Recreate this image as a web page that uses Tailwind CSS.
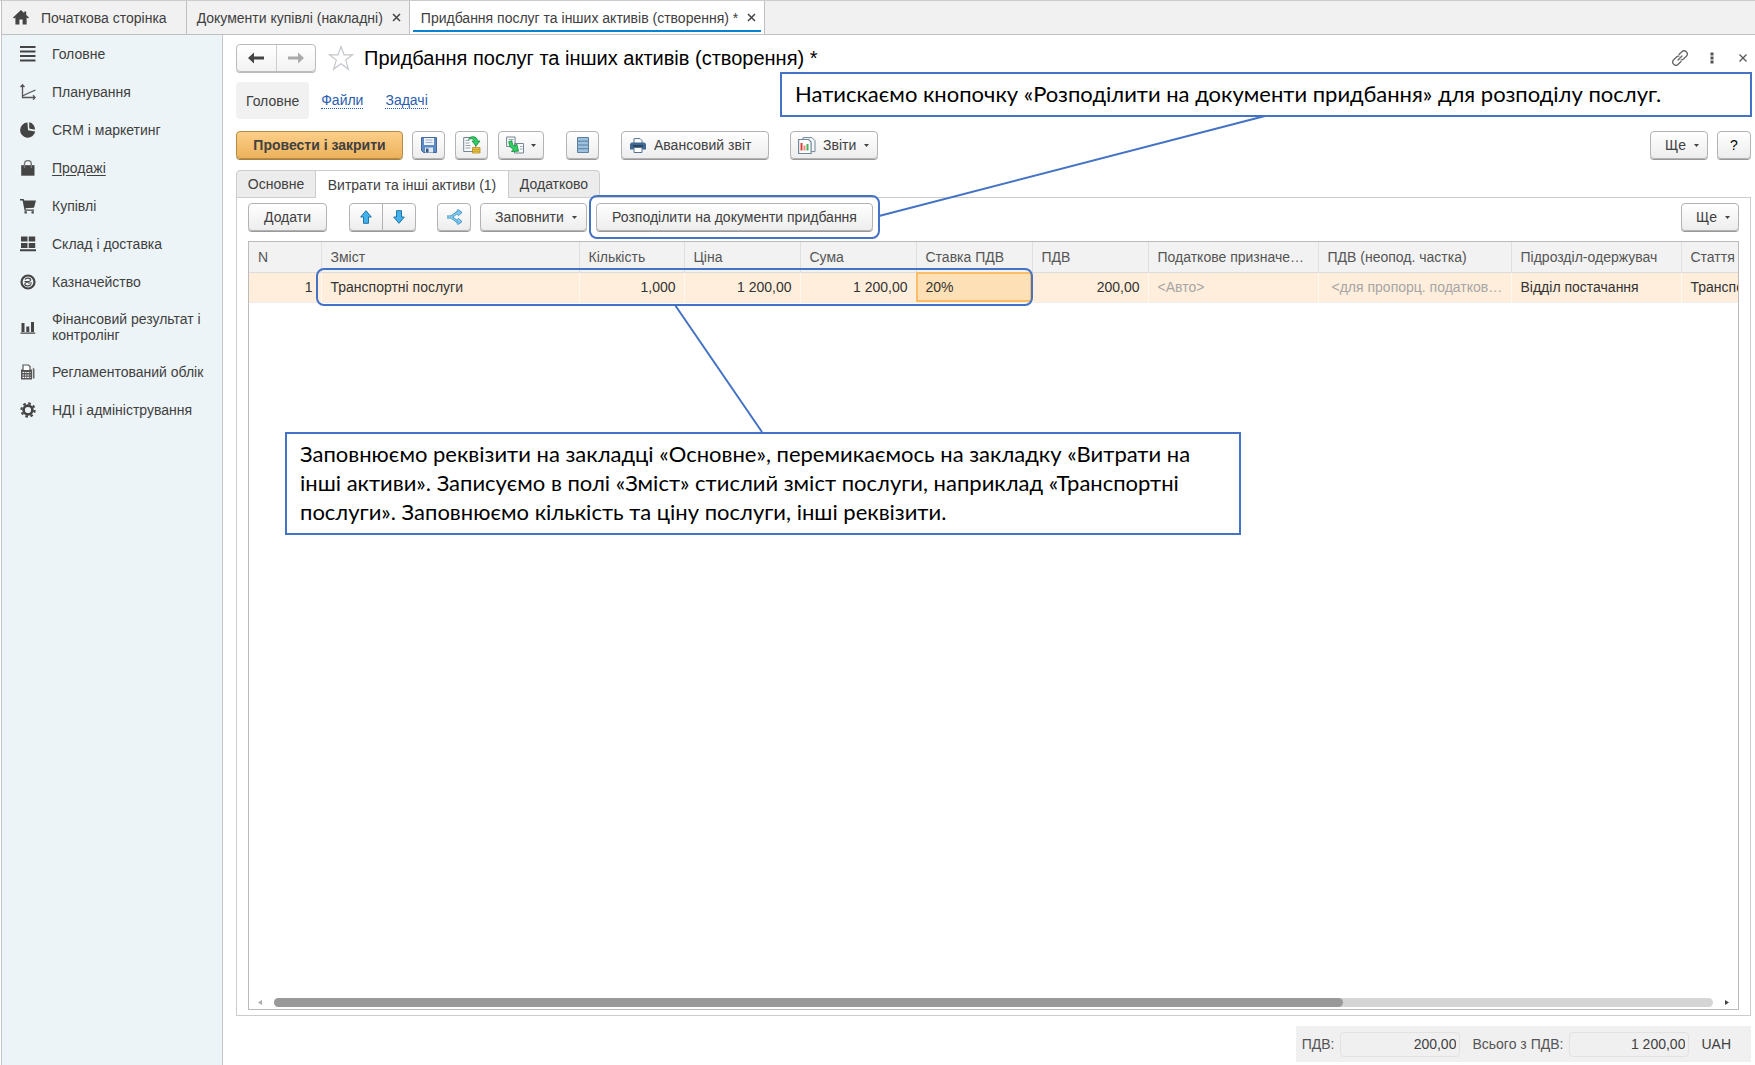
<!DOCTYPE html>
<html lang="uk">
<head>
    <meta charset="UTF-8">
    <meta name="viewport" content="width=device-width, initial-scale=1.0">
    <title>Придбання послуг та інших активів (створення) *</title>
    <script src="https://cdn.jsdelivr.net/npm/@tailwindcss/browser@4"></script>
</head>
<body class="bg-white font-['Liberation_Sans',Arial,sans-serif] text-sm text-[#404040]">
<div class="relative flex h-screen flex-col overflow-hidden border-t border-[#c9cdd1] pl-px">

    <!-- Open windows -->
    <nav class="flex h-[34px] shrink-0 border-b border-l border-[#c0c0c0] bg-[#f1f1f1] leading-4">
        <a href="#" class="flex items-center gap-3 border-r border-[#c0c0c0] pl-[11px] pr-[19px]">
            <svg class="h-[15px] w-4" viewBox="0 0 16 15" fill="#444"><path d="M8 0 0 7.6l1 1 1.4-1.2V14.5h4V9.6h3.2v4.9h4V7.4L15 8.6l1-1-2.8-2.7V1.5h-2v1.6z"/></svg>
            Початкова сторінка
        </a>
        <div class="flex items-center gap-[9px] border-r border-[#c0c0c0] px-2">
            <a href="#" class="pl-[2px]">Документи купівлі (накладні)</a>
            <button aria-label="Закрити"><svg class="size-[9px]" viewBox="0 0 9 9" stroke="#444" stroke-width="1.500"><path d="M1 1l7 7M8 1l-7 7"/></svg></button>
        </div>
        <div class="flex border-r border-[#c0c0c0] bg-white px-[3px]">
            <div class="mb-[2px] flex items-center gap-[9px] border-b-2 border-[#0a84d0] pl-2 pr-[5px] pt-1">
                <a href="#">Придбання послуг та інших активів (створення) *</a>
                <button aria-label="Закрити"><svg class="size-[9px]" viewBox="0 0 9 9" stroke="#444" stroke-width="1.500"><path d="M1 1l7 7M8 1l-7 7"/></svg></button>
            </div>
        </div>
    </nav>

    <div class="flex min-h-0 flex-1">
        <!-- Sections -->
        <aside class="w-[222px] shrink-0 border-x border-[#c4c8ca] bg-[#edf4f7] leading-4">
            <a href="#" class="flex items-center gap-4 py-[11px] pl-[18px] pr-3">
                <svg class="size-4 shrink-0" viewBox="0 0 16 16" fill="#444"><path d="M0 0h15.500v2H0zM0 4.500h15.500v2H0zM0 9h15.500v2H0zM0 13.500h15.500v2H0z"/></svg>
                Головне
            </a>
            <a href="#" class="flex items-center gap-4 py-[11px] pl-[18px] pr-3">
                <svg class="size-4 shrink-0" viewBox="0 0 16 16" fill="none" stroke="#555" stroke-width="1.300"><path d="M2.500 1v12.500H15M.500 3l2-2.200 2 2.200M13 11.300l2.200 2.200-2.200 2.200M2.500 12 7.500 9.500 15.500 6"/></svg>
                Планування
            </a>
            <a href="#" class="flex items-center gap-4 py-[11px] pl-[18px] pr-3">
                <svg class="size-4 shrink-0" viewBox="0 0 16 16" fill="#444"><path d="M7.500.5A7.600 7.600 0 1 0 15.200 9.500L8 8.200z"/><path d="M9.200.3v6.200l5.800 1.200A7 7 0 0 0 9.200.3z"/></svg>
                CRM і маркетинг
            </a>
            <a href="#" class="flex items-center gap-4 py-[11px] pl-[18px] pr-3 underline underline-offset-2">
                <svg class="size-4 shrink-0" viewBox="0 0 16 16" fill="#444"><path d="M1.200 5.200h13.300v10.500H1.200z"/><path d="M4.500 8V4a3.400 3.400 0 0 1 6.800 0v4" fill="none" stroke="#777" stroke-width="1.400"/></svg>
                Продажі
            </a>
            <a href="#" class="flex items-center gap-4 py-[11px] pl-[18px] pr-3">
                <svg class="size-4 shrink-0" viewBox="0 0 16 16" fill="#444"><path d="M0 1h3.600l.6 1.500H16L14 9.800l-8.500.4.300 1.200H14v1.300H4.600L2.600 2.400H0z"/><path d="M4.500 13.300h2.300v2.200H4.500zM11.500 13.300h2.300v2.200h-2.300z"/></svg>
                Купівлі
            </a>
            <a href="#" class="flex items-center gap-4 py-[11px] pl-[18px] pr-3">
                <svg class="size-4 shrink-0" viewBox="0 0 16 16" fill="#444"><path d="M1 .5h6.500v5H1zM8.700.5h6.500v5H8.700zM1 7h6.500v5H1zM8.700 7h6.500v5H8.700zM0 13.300h16v2H0z"/></svg>
                Склад і доставка
            </a>
            <a href="#" class="flex items-center gap-4 py-[11px] pl-[18px] pr-3">
                <svg class="size-4 shrink-0" viewBox="0 0 16 16" fill="none" stroke="#444"><circle cx="8" cy="8" r="6.500" stroke-width="2.200"/><path d="M5 5.500C6 3.500 10.500 3.600 10.700 6c0 2-6 2-6 4 .3 2.400 5 2.500 6.300.4M4.500 7.500h4M8 9h4" stroke-width="1.200"/></svg>
                Казначейство
            </a>
            <a href="#" class="flex items-center gap-4 py-[10px] pl-[18px] pr-3">
                <svg class="size-4 shrink-0" viewBox="0 0 16 16" fill="#444"><path d="M.500 13.500H15.200v1.300H.5zM1.500 4h3v9h-3zM6.300 7.500h3v5.500h-3zM11 3h3v10h-3z"/></svg>
                Фінансовий результат і контролінг
            </a>
            <a href="#" class="flex items-center gap-4 py-[11px] pl-[18px] pr-3">
                <svg class="size-4 shrink-0" viewBox="0 0 16 16"><path d="M1 5.500h11v10H1z" fill="#555"/><path d="M3 6V1h5.500L10 2.500V6" fill="#fff" stroke="#555" stroke-width="1.200"/><path d="M12.800 3.500 14.500 5v9.500h-1.700z" fill="#666"/><path d="M2.500 8.500h8M2.500 11h8M2.500 13.400h8" stroke="#fff" stroke-width="1.200" stroke-dasharray="1.600 .8"/></svg>
                Регламентований облік
            </a>
            <a href="#" class="flex items-center gap-4 py-[11px] pl-[18px] pr-3">
                <svg class="size-4 shrink-0" viewBox="0 0 16 16" fill="none" stroke="#444"><circle cx="8" cy="8" r="4.400" stroke-width="2.600"/><circle cx="8" cy="8" r="6.600" stroke-width="2.200" stroke-dasharray="2.600 2.583"/></svg>
                НДІ і адміністрування
            </a>
        </aside>

        <main class="flex min-w-0 flex-1 flex-col pl-[13px] pr-1 pt-[9px]">
            <!-- Form title -->
            <header class="flex h-7 shrink-0 items-center">
                <div class="flex h-7 w-20 divide-x divide-[#ccc] rounded-sm border border-[#bbb] bg-linear-to-b from-white to-[#f2f2f2] shadow-[0_1px_0_#bbb]">
                    <button aria-label="Назад" class="flex flex-1 items-center justify-center"><svg class="h-3 w-4" viewBox="0 0 16 12" fill="#444"><path d="M0 6 6 .5v4h10v3H6v4z"/></svg></button>
                    <button aria-label="Вперед" class="flex flex-1 items-center justify-center"><svg class="h-3 w-4" viewBox="0 0 16 12" fill="#aaa"><path d="M16 6 10 .5v4H0v3h10v4z"/></svg></button>
                </div>
                <button aria-label="До обраного" class="ml-3"><svg class="size-[26px]" viewBox="0 0 26 26" fill="#fff" stroke="#c4c8cc" stroke-width="1.200"><path d="m13 1.500 3 8.300h8.700l-7 5.300 2.700 9L13 18.700 5.600 24.100l2.700-9-7-5.300H10z"/></svg></button>
                <h1 class="ml-[10px] text-[20px] leading-7 text-black">Придбання послуг та інших активів (створення) *</h1>
                <div class="ml-auto flex items-center pr-1">
                    <button aria-label="Посилання"><svg class="size-4" viewBox="0 0 16 16" fill="none" stroke="#666" stroke-width="1.300" stroke-linecap="round"><path d="M7 4.500 9.800 1.700a3 3 0 0 1 4.500 4.500L11.500 9a3 3 0 0 1-2.300.8M9 11.500l-2.800 2.800a3 3 0 0 1-4.500-4.500L4.500 7a3 3 0 0 1 2.300-.8M6 10l4-4"/></svg></button>
                    <button aria-label="Ще дії" class="ml-[22px]"><svg class="h-3 w-1" viewBox="0 0 4 12" fill="#555"><path d="M.500.5h3v3h-3zM.500 4.500h3v3h-3zM.500 8.500h3v3h-3z"/></svg></button>
                    <button aria-label="Закрити" class="ml-[25px]"><svg class="size-2" viewBox="0 0 8 8" stroke="#555" stroke-width="1.300"><path d="M.5.5l7 7M7.500.5l-7 7"/></svg></button>
                </div>
            </header>

            <nav class="mt-[10px] flex h-[37px] shrink-0 items-center text-[#2a5db0]">
                <a href="#" class="flex h-full items-center rounded-sm bg-[#f1f1f1] px-[10px] text-[#404040]">Головне</a>
                <a href="#" class="ml-3 border-b border-dotted border-[#2a5db0] leading-4">Файли</a>
                <a href="#" class="ml-[22px] border-b border-dotted border-[#2a5db0] leading-4">Задачі</a>
            </nav>

            <!-- Command bar -->
            <div class="mt-3 flex h-7 shrink-0">
                <button class="w-[167px] rounded-sm border border-[#b58a45] bg-linear-to-b from-[#fdcf88] to-[#ecb25c] font-bold shadow-[0_1px_0_#a88040]">Провести і закрити</button>
                <button aria-label="Записати" class="ml-[9px] flex w-[33px] items-center justify-center rounded-sm border border-[#b3b3b3] bg-linear-to-b from-white to-[#ededed] shadow-[0_1px_0_#999]">
                    <svg class="size-4" viewBox="0 0 16 16"><path d="M.5.5h15v15h-13l-2-2z" fill="#5b8ac4" stroke="#46699b"/><path d="M3 1h10v7H3z" fill="#eef4fa"/><path d="M4.500 3h7M4.500 5.500h7" stroke="#9ab3cf"/><path d="M4 10.500h8v5H4z" fill="#dfe8f0"/><path d="M5 11.500h2.500v4H5z" fill="#365988"/></svg>
                </button>
                <button aria-label="Провести" class="ml-[10px] flex w-[33px] items-center justify-center rounded-sm border border-[#b3b3b3] bg-linear-to-b from-white to-[#ededed] shadow-[0_1px_0_#999]">
                    <svg class="size-[18px]" viewBox="0 0 18 18"><path d="M.7 1.500h12v14H.7z" fill="#f7f9fa" stroke="#76858f"/><path d="M2.500 4.500h4M2.500 7h4M2.500 9.500h5M2.500 12h5" stroke="#9aa6ae"/><path d="M5.500 3.500C7-.5 14-.5 14.500 5H17l-4 5-4-5h2.500C11 3 8 2 5.500 3.500z" fill="#2fce62" stroke="#158a3c" stroke-width=".8"/><path d="M9.500 11.500h7.500v5.500H9.500z" fill="#f2cd4a" stroke="#b58d1d" stroke-width=".8"/><path d="M9.500 13.300h7.500M9.500 15.200h7.500" stroke="#b58d1d" stroke-width=".8"/></svg>
                </button>
                <button aria-label="Створити на підставі" class="ml-[10px] flex w-[46px] items-center justify-center gap-[7px] rounded-sm border border-[#b3b3b3] bg-linear-to-b from-white to-[#ededed] shadow-[0_1px_0_#999]">
                    <svg class="size-[18px]" viewBox="0 0 18 18"><path d="M.6 1h8.500v9.500H.6zM8.500 7.500h9v9.500h-9z" fill="#f7f9fa" stroke="#76858f"/><path d="M2.500 3.500h5M14 10.500h2.500M14 13h2.500" stroke="#9aa6ae"/><path d="M2.800 5.500 6 4.800c0 3 .8 4.600 2.800 5.400l2-2.200 1.700 7.200-7 .3 1.800-2.200C4.500 12 3 9.500 2.800 5.500z" fill="#2fce62" stroke="#158a3c" stroke-width=".8"/></svg>
                    <svg class="h-[3px] w-[5px]" viewBox="0 0 5 3" fill="#444"><path d="M0 0h5L2.500 3z"/></svg>
                </button>
                <button aria-label="Рухи документа" class="ml-[22px] flex w-[33px] items-center justify-center rounded-sm border border-[#b3b3b3] bg-linear-to-b from-white to-[#ededed] shadow-[0_1px_0_#999]">
                    <svg class="h-4 w-3" viewBox="0 0 12 16" fill="#9cc0dd" stroke="#5b7f9e"><path d="M.5.5h11v15H.5zM.5 4.200h11M.5 8h11M.5 11.700h11"/></svg>
                </button>
                <button class="ml-[22px] flex w-[148px] items-center gap-2 rounded-sm border border-[#b3b3b3] bg-linear-to-b from-white to-[#ededed] pl-2 shadow-[0_1px_0_#999]">
                    <svg class="h-[15px] w-4" viewBox="0 0 16 15"><path d="M4 5V.6h6l2 2V5" fill="#fff" stroke="#59738c"/><path d="M1.500 4.500h13L16 6v5.500H0V6z" fill="#3f6990"/><path d="M3 8h10" stroke="#1f3c58" stroke-width="1.500"/><path d="M4 9.500h8v5H4z" fill="#fff" stroke="#59738c"/></svg>
                    Авансовий звіт
                </button>
                <button class="ml-[21px] flex w-[88px] items-center rounded-sm border border-[#b3b3b3] bg-linear-to-b from-white to-[#ededed] pl-[7px] shadow-[0_1px_0_#999]">
                    <svg class="h-[17px] w-[18px]" viewBox="0 0 18 17"><path d="M5 .6h9l3 3v11H5z" fill="#f4f6f8" stroke="#71879a"/><path d="M.6 2.500h10l2.500 2.500v11.500H.6z" fill="#fff" stroke="#71879a" stroke-width="1.200"/><path d="M2.500 6h2v7.500h-2z" fill="#d8413c"/><path d="M5.500 8.500h2v5h-2z" fill="#e88c80"/><path d="M8.500 7h2v6.500h-2z" fill="#44b05a"/></svg>
                    <span class="ml-[7px]">Звіти</span>
                    <svg class="ml-2 h-[3px] w-[5px]" viewBox="0 0 5 3" fill="#444"><path d="M0 0h5L2.500 3z"/></svg>
                </button>
                <button class="ml-auto flex w-[58px] items-center gap-2 rounded-sm border border-[#b3b3b3] bg-linear-to-b from-white to-[#ededed] pl-[14px] shadow-[0_1px_0_#999]">Ще <svg class="h-[3px] w-[5px]" viewBox="0 0 5 3" fill="#444"><path d="M0 0h5L2.500 3z"/></svg></button>
                <button aria-label="Довідка" class="ml-[9px] w-[34px] rounded-sm border border-[#b3b3b3] bg-linear-to-b from-white to-[#ededed] text-black shadow-[0_1px_0_#999]">?</button>
            </div>

            <!-- Page tabs -->
            <div class="relative z-10 mt-[11px] -mb-px flex h-7 shrink-0">
                <button class="w-20 rounded-tl-sm border border-[#ccc] bg-[#ececec]">Основне</button>
                <button class="w-[192px] border-t border-[#ccc] bg-white">Витрати та інші активи (1)</button>
                <button class="w-[92px] rounded-tr-sm border border-[#ccc] bg-[#ececec]">Додатково</button>
            </div>

            <section class="flex min-h-0 flex-1 flex-col border border-[#ccc] px-[11px] pb-[5px] pt-[5px]">
                <div class="flex h-7 shrink-0">
                    <button class="w-[79px] rounded-sm border border-[#b3b3b3] bg-linear-to-b from-white to-[#ededed] shadow-[0_1px_0_#999]">Додати</button>
                    <div class="ml-[22px] flex w-[67px] divide-x divide-[#b3b3b3] rounded-sm border border-[#b3b3b3] bg-linear-to-b from-white to-[#ededed] shadow-[0_1px_0_#999]">
                        <button aria-label="Вгору" class="flex flex-1 items-center justify-center"><svg class="h-[14px] w-3" viewBox="0 0 12 14" fill="#43b1ec" stroke="#1f74a8"><path d="m6 .7 5.300 6.300H8.500v6.300h-5V7H.7z"/></svg></button>
                        <button aria-label="Вниз" class="flex flex-1 items-center justify-center"><svg class="h-[14px] w-3" viewBox="0 0 12 14" fill="#43b1ec" stroke="#1f74a8"><path d="M6 13.300 11.300 7H8.500V.7h-5V7H.7z"/></svg></button>
                    </div>
                    <button aria-label="Розбити рядок" class="ml-[21px] flex w-[34px] items-center justify-center rounded-sm border border-[#b3b3b3] bg-linear-to-b from-white to-[#ededed] shadow-[0_1px_0_#999]">
                        <svg class="size-4" viewBox="0 0 16 16" fill="none" stroke-linejoin="round"><path d="M1 8h3.500C7 8 8.500 3.500 13 3.500M4.500 8C7 8 8.500 12.500 13 12.500M11 1.200l3.500 2.300L11.500 6M11.500 10l3 2.500-3.500 2.300" stroke="#3a8fbd" stroke-width="2.800"/><path d="M1 8h3.500C7 8 8.500 3.500 13 3.500M4.500 8C7 8 8.500 12.500 13 12.500M11 1.200l3.500 2.300L11.500 6M11.500 10l3 2.500-3.500 2.300" stroke="#86cdf0" stroke-width="1.300"/></svg>
                    </button>
                    <button class="ml-[9px] flex w-[107px] items-center gap-2 rounded-sm border border-[#b3b3b3] bg-linear-to-b from-white to-[#ededed] pl-[14px] shadow-[0_1px_0_#999]">Заповнити <svg class="h-[3px] w-[5px]" viewBox="0 0 5 3" fill="#444"><path d="M0 0h5L2.500 3z"/></svg></button>
                    <div class="relative ml-[9px] flex w-[277px]">
                        <button class="flex-1 rounded-sm border border-[#b3b3b3] bg-linear-to-b from-white to-[#ededed] shadow-[0_1px_0_#999]">Розподілити на документи придбання</button>
                        <div class="pointer-events-none absolute -inset-x-[7px] -inset-y-2 z-20 rounded-lg border-2 border-[#4472c4]"></div>
                    </div>
                    <button class="ml-auto flex w-[58px] items-center gap-2 rounded-sm border border-[#b3b3b3] bg-linear-to-b from-white to-[#ededed] pl-[14px] shadow-[0_1px_0_#999]">Ще <svg class="h-[3px] w-[5px]" viewBox="0 0 5 3" fill="#444"><path d="M0 0h5L2.500 3z"/></svg></button>
                </div>

                <!-- Services list -->
                <div class="mt-[10px] flex min-h-0 flex-1 flex-col border border-[#bbb]">
                    <div class="relative flex-1 overflow-hidden">
                        <table class="w-[1632px] table-fixed border-collapse whitespace-nowrap leading-4">
                            <colgroup>
                                <col class="w-[72px]"><col class="w-[258px]"><col class="w-[105px]"><col class="w-[116px]"><col class="w-[116px]"><col class="w-[116px]"><col class="w-[116px]"><col class="w-[170px]"><col class="w-[193px]"><col class="w-[170px]"><col class="w-[200px]">
                            </colgroup>
                            <thead>
                                <tr class="h-[30px] divide-x divide-[#e0e0e0] border-b border-[#dcdcdc] bg-[#f2f2f2] text-left text-[#555]">
                                    <th class="pl-[9px] pr-2 font-normal">N</th>
                                    <th class="pl-[9px] pr-2 font-normal">Зміст</th>
                                    <th class="pl-[9px] pr-2 font-normal">Кількість</th>
                                    <th class="pl-[9px] pr-2 font-normal">Ціна</th>
                                    <th class="pl-[9px] pr-2 font-normal">Сума</th>
                                    <th class="pl-[9px] pr-2 font-normal">Ставка ПДВ</th>
                                    <th class="pl-[9px] pr-2 font-normal">ПДВ</th>
                                    <th class="pl-[9px] pr-2 font-normal">Податкове призначе…</th>
                                    <th class="pl-[9px] pr-2 font-normal">ПДВ (неопод. частка)</th>
                                    <th class="pl-[9px] pr-2 font-normal">Підрозділ-одержувач</th>
                                    <th class="pl-[9px] pr-2 font-normal">Стаття</th>
                                </tr>
                            </thead>
                            <tbody>
                                <tr class="h-[30px] divide-x divide-[#fff8ee] border-b border-[#eee] bg-[#feeedb] text-[#333]">
                                    <td class="pl-[9px] pr-2 text-right">1</td>
                                    <td class="pl-[9px] pr-2">Транспортні послуги</td>
                                    <td class="pl-[9px] pr-2 text-right">1,000</td>
                                    <td class="pl-[9px] pr-2 text-right">1 200,00</td>
                                    <td class="pl-[9px] pr-2 text-right">1 200,00</td>
                                    <td class="bg-[#fde0b5] pl-[9px] pr-2 outline-2 -outline-offset-2 outline-[#fcbd66]">20%</td>
                                    <td class="pl-[9px] pr-2 text-right">200,00</td>
                                    <td class="pl-[9px] pr-2 text-[#a6a6a6]">&lt;Авто&gt;</td>
                                    <td class="pl-[13px] pr-2 text-[#a6a6a6]">&lt;для пропорц. податков…</td>
                                    <td class="pl-[9px] pr-2">Відділ постачання</td>
                                    <td class="pl-[9px] pr-2">Транспортні</td>
                                </tr>
                            </tbody>
                        </table>
                        <div class="pointer-events-none absolute left-[67px] top-[26px] h-[38px] w-[717px] rounded-lg border-2 border-[#4472c4]"></div>
                    </div>
                    <div class="flex h-[14px] shrink-0 items-center gap-3 px-[9px]">
                        <svg class="h-[5px] w-1" viewBox="0 0 4 5" fill="#aaa"><path d="M4 0v5L0 2.500z"/></svg>
                        <div class="h-[9px] flex-1 rounded-full bg-[#d5d5d5]">
                            <div class="h-full rounded-full bg-[#999]" style="width: 74.3%"></div>
                        </div>
                        <svg class="h-[5px] w-1" viewBox="0 0 4 5" fill="#444"><path d="M0 0v5l4-2.500z"/></svg>
                    </div>
                </div>
            </section>

            <!-- Totals -->
            <footer class="mb-[3px] mt-[10px] flex h-9 shrink-0 items-center self-end bg-[#f0f0f0] pl-[6px] pr-5">
                <label for="vat" class="text-[#555]">ПДВ:</label>
                <input id="vat" type="text" readonly value="200,00" class="ml-[6px] h-[25px] w-[120px] rounded-sm border border-[#e2e2e2] px-[3px] text-right">
                <label for="total" class="ml-3 text-[#555]">Всього з ПДВ:</label>
                <input id="total" type="text" readonly value="1 200,00" class="ml-[6px] h-[25px] w-[120px] rounded-sm border border-[#e2e2e2] px-[3px] text-right">
                <span class="ml-3">UAH</span>
            </footer>
        </main>
    </div>

    <!-- Callouts -->
    <svg class="pointer-events-none absolute left-0 top-0 z-20 h-[440px] w-[1300px]" viewBox="0 0 1300 440" stroke="#4472c4" stroke-width="2"><path d="M879 215 1265 115M675 304l87 127"/></svg>
    <p class="absolute left-[780px] right-[3px] top-[71px] z-30 border-2 border-[#4472c4] bg-white px-[13px] pb-[7px] pt-[5px] font-[Lato,sans-serif] text-[22px] leading-[29px] text-black">Натискаємо кнопочку «Розподілити на документи придбання» для розподілу послуг.</p>
    <p class="absolute left-[285px] top-[431px] z-30 w-[956px] border-2 border-[#4472c4] bg-white px-[13px] pb-[7px] pt-[5px] font-[Lato,sans-serif] text-[22px] leading-[29px] text-black">Заповнюємо реквізити на закладці «Основне», перемикаємось на закладку «Витрати на інші активи». Записуємо в полі «Зміст» стислий зміст послуги, наприклад «Транспортні послуги». Заповнюємо кількість та ціну послуги, інші реквізити.</p>
</div>
</body>
</html>
